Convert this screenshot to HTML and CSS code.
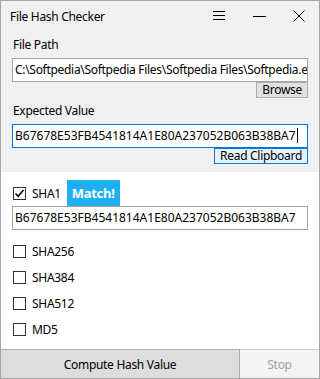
FILE: index.html
```html
<!DOCTYPE html>
<html lang="en">
<head>
  <meta charset="UTF-8" />
  <meta name="viewport" content="width=device-width, initial-scale=1.0"/>
  <title>File Hash Checker</title>
  <link rel="stylesheet" href="styles.css">
</head>
<body>
  <div class="window">
    <header class="titlebar">
      <span class="title">File Hash Checker</span>
      <span class="caption-btn">
        <svg width="12" height="10" viewBox="0 0 12 10"><path d="M0 0.5H12M0 4.5H12M0 8.5H12" stroke="#000" stroke-width="1"/></svg>
      </span>
      <span class="caption-btn">
        <svg width="13" height="2" viewBox="0 0 13 2"><path d="M0 1.5H13" stroke="#000" stroke-width="1"/></svg>
      </span>
      <span class="caption-btn">
        <svg width="12" height="12" viewBox="0 0 12 12"><path d="M0.5 0.5L11.5 11.5M11.5 0.5L0.5 11.5" stroke="#000" stroke-width="1"/></svg>
      </span>
    </header>

    <section class="top">
      <div class="label">File Path</div>
      <div class="textbox">C:\Softpedia\Softpedia Files\Softpedia Files\Softpedia.exe</div>
      <div class="btn-row"><button class="small-btn">Browse</button></div>

      <div class="label">Expected Value</div>
      <div class="textbox hash focused">B67678E53FB4541814A1E80A237052B063B38BA7<span class="caret"></span></div>
      <div class="btn-row"><button class="small-btn accent">Read Clipboard</button></div>
    </section>

    <section class="hashes">
      <div class="check-row sha1">
        <span class="box"><svg width="11" height="11" viewBox="0 0 11 11"><path d="M1.5 5.5L4.2 8.3L9.5 2" fill="none" stroke="#000" stroke-width="1.5"/></svg></span>
        <span>SHA1</span>
        <span class="match">Match!</span>
      </div>
      <div class="textbox hash">B67678E53FB4541814A1E80A237052B063B38BA7</div>

      <div class="options">
        <div class="check-row"><span class="box"></span><span>SHA256</span></div>
        <div class="check-row"><span class="box"></span><span>SHA384</span></div>
        <div class="check-row"><span class="box"></span><span>SHA512</span></div>
        <div class="check-row"><span class="box"></span><span>MD5</span></div>
      </div>
    </section>

    <footer class="footer">
      <button class="compute">Compute Hash Value</button>
      <button class="stop" disabled>Stop</button>
    </footer>
  </div>
</body>
</html>
```

FILE: styles.css
```css
:root {
  --face: #f0f0f0;
  --frame: #a5a5a5;
  --field-border: #a3a3a3;
  --accent: #0078d7;
  --match: #1eaff0;
}

body {
  margin: 0;
  font-family: "Noto Sans", Arial, sans-serif;
  font-size: 12px;
  letter-spacing: -0.3px;
  color: #000;
}

.window {
  width: 320px;
  height: 379px;
  box-sizing: border-box;
  border: 1px solid var(--frame);
  display: flex;
  flex-direction: column;
  background: #fff;
}

.titlebar {
  height: 30px;
  display: flex;
  align-items: center;
  background: var(--face);
  padding-left: 9px;
}

.title {
  flex: 1;
}

.caption-btn {
  width: 40px;
  height: 30px;
  display: flex;
  align-items: center;
  justify-content: center;
}

.top {
  background: var(--face);
  padding: 0 11px 8px;
}

.label {
  line-height: 16px;
  margin-top: 6px;
  margin-bottom: 5px;
  padding-left: 1px;
}

.top .btn-row + .label {
  margin-top: 5px;
}

.textbox {
  height: 24px;
  box-sizing: border-box;
  border: 1px solid var(--field-border);
  background: #fff;
  padding: 0 2px;
  line-height: 22px;
  white-space: nowrap;
  overflow: hidden;
}

.textbox.hash {
  letter-spacing: 0;
}

.textbox.focused {
  border-color: var(--accent);
}

.caret {
  display: inline-block;
  width: 1px;
  height: 15px;
  background: #000;
  vertical-align: -3px;
  margin-left: 1px;
}

.btn-row {
  display: flex;
  justify-content: flex-end;
}

.small-btn {
  height: 16px;
  padding: 0 5px;
  font: inherit;
  letter-spacing: inherit;
  line-height: 14px;
  color: #000;
  background: #e1e1e1;
  border: 1px solid #adadad;
}

.small-btn.accent {
  background: #e5f1fb;
  border-color: var(--accent);
}

.hashes {
  flex: 1;
  padding: 8px 11px 0;
}

.check-row {
  height: 26px;
  display: flex;
  align-items: center;
  gap: 6px;
}

.box {
  width: 13px;
  height: 13px;
  box-sizing: border-box;
  border: 1px solid #333;
  background: #fff;
  display: flex;
  align-items: center;
  justify-content: center;
  margin-left: 1px;
}

.match {
  height: 26px;
  padding: 0 5px;
  display: flex;
  align-items: center;
  background: var(--match);
  color: #fff;
  font-size: 13px;
  font-weight: bold;
}

.options {
  margin-top: 8px;
}

.footer {
  height: 29px;
  display: flex;
}

.footer button {
  font: inherit;
  letter-spacing: inherit;
  height: 29px;
  margin: 0;
}

.compute {
  width: 239px;
  background: #dddddd;
  border: 1px solid #adadad;
  border-left: none;
  border-bottom: none;
  color: #000;
}

.stop {
  flex: 1;
  background: #f4f4f4;
  border: none;
  border-top: 1px solid #cccccc;
  color: #a0a0a0;
}
```
